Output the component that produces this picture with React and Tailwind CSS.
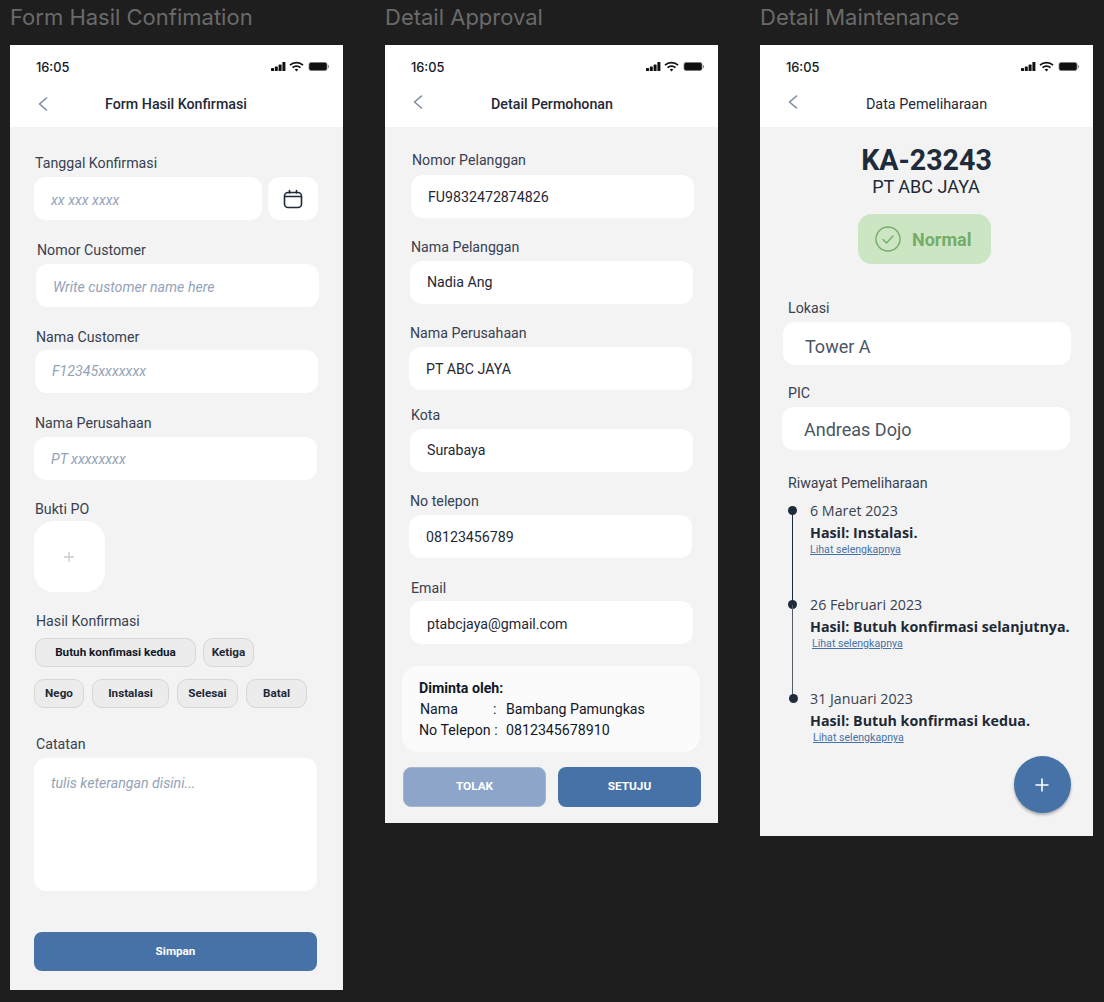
const SANS = "font-['Roboto',sans-serif]";

function StatusBar() {
  return (
    <div className="flex items-center justify-between h-[44px] pt-[1px]">
      <span className="font-['Inter',sans-serif] text-[12.8px] font-medium text-[#111827] ml-[26px]">16:05</span>
      <svg width="60" height="12" viewBox="0 0 60 12" className="mr-[14px] mt-[-2px]">
        <rect x="2" y="7" width="3" height="3" rx="0.6" fill="#111" />
        <rect x="5.8" y="5.5" width="3" height="4.5" rx="0.6" fill="#111" />
        <rect x="9.6" y="3.5" width="3" height="6.5" rx="0.6" fill="#111" />
        <rect x="13.4" y="1" width="3" height="9" rx="0.6" fill="#111" />
        <path d="M21 4.2a9.4 9.4 0 0 1 13 0" fill="none" stroke="#111" strokeWidth="1.7" />
        <path d="M23.5 6.7a5.8 5.8 0 0 1 8 0" fill="none" stroke="#111" strokeWidth="1.7" />
        <path d="M25.7 8.6a2.6 2.6 0 0 1 3.6 0L27.5 10.6z" fill="#111" />
        <rect x="40" y="1.5" width="18" height="8" rx="2" fill="#111" stroke="#777" strokeWidth="0.8" />
        <rect x="59" y="4" width="1" height="3" rx="0.5" fill="#888" />
      </svg>
    </div>
  );
}

function Chevron({ className }) {
  return (
    <svg width="10" height="14" viewBox="0 0 10 14" fill="none" className={className}>
      <path d="M8.5 1 1.5 7l7 6" stroke="#7c8aa0" strokeWidth="1.6" strokeLinecap="round" strokeLinejoin="round" />
    </svg>
  );
}

function Header({ title, chevron, titleClass }) {
  return (
    <div className="bg-white h-[82px] shrink-0">
      <StatusBar />
      <div className="relative h-[38px] flex items-start justify-center pt-[7px]">
        <Chevron className={chevron} />
        <span className={`${SANS} leading-[16px] text-[#1f2937] ${titleClass}`}>{title}</span>
      </div>
    </div>
  );
}

function Label({ children, className }) {
  return <div className={`${SANS} text-[14.2px] leading-[16px] text-[#374151] ${className}`}>{children}</div>;
}

function Input({ children, className, italic, big }) {
  return (
    <div
      className={`h-[43px] bg-white rounded-[12px] flex items-center ${SANS} ${
        italic ? "italic text-[#94a3b8] text-[14.2px]" : big ? "text-[18px] text-[#4b5563]" : "text-[14.2px] text-[#1f2937]"
      } ${className}`}
    >
      {children}
    </div>
  );
}

function Chip({ children, className }) {
  return (
    <div
      className={`h-[29px] rounded-[10px] bg-[#ececec] border border-[#d6d6d6] flex items-center justify-center ${SANS} text-[11.7px] font-bold text-[#1f2937] ${className}`}
    >
      {children}
    </div>
  );
}

function FormScreen() {
  return (
    <div className="w-[333px] h-[945px] bg-[#f3f3f3] flex flex-col">
      <Header title="Form Hasil Konfirmasi" chevron="absolute left-[28px] top-[8px]" titleClass="ml-[-1px] text-[14.25px] font-medium" />
      <Label className="mt-[28px] ml-[25px]">Tanggal Konfirmasi</Label>
      <div className="flex mt-[6px] ml-[24px] gap-[6px]">
        <Input italic className="w-[228px] pl-[17px] pt-[4px]">xx xxx xxxx</Input>
        <div className="w-[50px] h-[43px] bg-white rounded-[12px] flex items-center justify-center">
          <svg width="20" height="20" viewBox="0 0 20 20" fill="none" stroke="#1f2937" strokeWidth="1.6" strokeLinecap="round">
            <rect x="1.5" y="3.5" width="17" height="15" rx="3.5" />
            <path d="M2 7.5h16M6.5 1.5v2.5M13.5 1.5v2.5" />
          </svg>
        </div>
      </div>
      <Label className="mt-[22px] ml-[27px]">Nomor Customer</Label>
      <Input italic className="mt-[6px] ml-[26px] w-[283px] pl-[17px] pt-[4px]">Write customer name here</Input>
      <Label className="mt-[22px] ml-[26px]">Nama Customer</Label>
      <Input italic className="mt-[5px] ml-[25px] w-[283px] pl-[17px]">F12345xxxxxxx</Input>
      <Label className="mt-[22px] ml-[25px]">Nama Perusahaan</Label>
      <Input italic className="mt-[6px] ml-[24px] w-[283px] pl-[17px] pt-[2px]">PT xxxxxxxx</Input>
      <Label className="mt-[21px] ml-[25px]">Bukti PO</Label>
      <div className="mt-[4px] ml-[24px] w-[71px] h-[71px] bg-white rounded-[20px] flex items-center justify-center">
        <svg width="12" height="12" viewBox="0 0 12 12" stroke="#cfc9cc" strokeWidth="1.3" className="ml-[-2px]">
          <path d="M6 1v10M1 6h10" />
        </svg>
      </div>
      <Label className="mt-[21px] ml-[26px]">Hasil Konfirmasi</Label>
      <div className="flex mt-[9px] ml-[25px] gap-[7px]">
        <Chip className="w-[161px] text-[#111827]">Butuh konfimasi kedua</Chip>
        <Chip className="w-[51px]">Ketiga</Chip>
      </div>
      <div className="flex mt-[12px] ml-[24px] gap-[8px]">
        <Chip className="w-[50px]">Nego</Chip>
        <Chip className="w-[77px]">Instalasi</Chip>
        <Chip className="w-[61px]">Selesai</Chip>
        <Chip className="w-[61px]">Batal</Chip>
      </div>
      <Label className="mt-[28px] ml-[26px]">Catatan</Label>
      <div className={`mt-[6px] ml-[24px] w-[283px] h-[133px] bg-white rounded-[12px] pl-[17px] pt-[17px] ${SANS} italic text-[14.2px] leading-[16px] text-[#94a3b8]`}>
        tulis keterangan disini...
      </div>
      <div className={`mt-[41px] ml-[24px] w-[283px] h-[39px] bg-[#4672a8] rounded-[8px] flex items-center justify-center ${SANS} text-[11.7px] font-bold text-white`}>
        Simpan
      </div>
    </div>
  );
}

function ApprovalScreen() {
  return (
    <div className="w-[333px] h-[778px] bg-[#f3f3f3] flex flex-col">
      <Header title="Detail Permohonan" chevron="absolute left-[28px] top-[6px]" titleClass="ml-[1px] text-[14.25px] font-medium" />
      <Label className="mt-[25px] ml-[27px]">Nomor Pelanggan</Label>
      <Input className="mt-[7px] ml-[26px] w-[283px] pl-[17px] pt-[2px]">FU9832472874826</Input>
      <Label className="mt-[21px] ml-[26px]">Nama Pelanggan</Label>
      <Input className="mt-[6px] ml-[25px] w-[283px] pl-[17px]">Nadia Ang</Input>
      <Label className="mt-[21px] ml-[25px]">Nama Perusahaan</Label>
      <Input className="mt-[6px] ml-[24px] w-[283px] pl-[17px] pt-[2px]">PT ABC JAYA</Input>
      <Label className="mt-[17px] ml-[26px]">Kota</Label>
      <Input className="mt-[6px] ml-[25px] w-[283px] pl-[17px]">Surabaya</Input>
      <Label className="mt-[21px] ml-[25px]">No telepon</Label>
      <Input className="mt-[6px] ml-[24px] w-[283px] pl-[17px] pt-[2px]">08123456789</Input>
      <Label className="mt-[22px] ml-[26px]">Email</Label>
      <Input className="mt-[5px] ml-[25px] w-[283px] pl-[17px] pt-[4px]">ptabcjaya@gmail.com</Input>
      <div className={`mt-[22px] ml-[17px] w-[298px] h-[86px] bg-[#fbfbfb] rounded-[16px] pl-[17px] pt-[12px] ${SANS} text-[14.2px] leading-[21px] text-[#111827]`}>
        <div className="font-bold">Diminta oleh:</div>
        <div className="flex"><span className="w-[74px] pl-[1px]">Nama</span><span className="w-[13px]">:</span><span>Bambang Pamungkas</span></div>
        <div className="flex"><span className="w-[87px] whitespace-pre">No Telepon :</span><span>0812345678910</span></div>
      </div>
      <div className="flex mt-[15px] ml-[18px] gap-[12px]">
        <div className={`w-[143px] h-[40px] rounded-[8px] bg-[#8ca5c8] border border-[#a9b6c9] flex items-center justify-center ${SANS} text-[11.8px] font-bold text-white`}>TOLAK</div>
        <div className={`w-[143px] h-[40px] rounded-[8px] bg-[#4672a8] flex items-center justify-center ${SANS} text-[11.8px] font-bold text-white`}>SETUJU</div>
      </div>
    </div>
  );
}

function TimelineItem({ date, result, linkClass, dotClass, last, lineClass }) {
  return (
    <div className="flex h-[94px] relative">
      <div className={`w-[9px] h-[9px] rounded-full bg-[#1e2b3a] mt-[5px] shrink-0 ${dotClass}`} />
      {!last && <div className={`absolute left-[4px] top-[10px] w-[1px] h-[90px] ${lineClass}`} />}
      <div className="ml-[13px] font-['Open_Sans',sans-serif] text-[#1f2937]">
        <div className="text-[14.25px] leading-[20px] text-[#374151]">{date}</div>
        <div className="text-[14.25px] leading-[20px] font-bold mt-[2px] whitespace-nowrap">{result}</div>
        <div className={`${SANS} text-[10.6px] leading-[12px] mt-[1px] text-[#4672a8] underline ${linkClass}`}>Lihat selengkapnya</div>
      </div>
    </div>
  );
}

function MaintenanceScreen() {
  return (
    <div className="w-[333px] h-[791px] bg-[#f3f3f3] flex flex-col relative">
      <Header title="Data Pemeliharaan" chevron="absolute left-[28px] top-[6px]" titleClass="text-[14.4px] mt-[1px]" />
      <div className={`mt-[16px] text-center ${SANS} text-[28.6px] leading-[34px] font-bold text-[#1e2b3a]`}>KA-23243</div>
      <div className={`text-center mt-[-1px] pr-[1px] ${SANS} text-[18px] leading-[22px] text-[#1f2937]`}>PT ABC JAYA</div>
      <div className="mt-[16px] ml-[98px] w-[133px] h-[50px] rounded-[14px] bg-[#cce5c3] flex items-center pl-[17px] gap-[11px]">
        <svg width="26" height="26" viewBox="0 0 26 26" fill="none" stroke="#74ad68" strokeWidth="1.4" strokeLinecap="round" strokeLinejoin="round">
          <circle cx="13" cy="13" r="12" />
          <path d="m8 13.5 3.5 3.5 6.5-7" />
        </svg>
        <span className={`${SANS} text-[18px] font-bold text-[#74ad68]`}>Normal</span>
      </div>
      <Label className="mt-[36px] ml-[28px]">Lokasi</Label>
      <Input big className="mt-[6px] ml-[23px] w-[288px] pl-[22px] pt-[6px]">Tower A</Input>
      <Label className="mt-[20px] ml-[28px]">PIC</Label>
      <Input big className="mt-[6px] ml-[22px] w-[288px] pl-[22px] pt-[2px]">Andreas Dojo</Input>
      <Label className="mt-[25px] ml-[28px]">Riwayat Pemeliharaan</Label>
      <div className="mt-[10px] ml-[28px]">
        <TimelineItem date="6 Maret 2023" result="Hasil: Instalasi." lineClass="bg-[#1e2b3a]" />
        <TimelineItem date="26 Februari 2023" result="Hasil: Butuh konfirmasi selanjutnya." linkClass="ml-[2px]" lineClass="bg-[#555d66]" />
        <TimelineItem date="31 Januari 2023" result="Hasil: Butuh konfirmasi kedua." linkClass="ml-[3px]" dotClass="ml-[1px] mr-[-1px]" last />
      </div>
      <div className="absolute left-[254px] top-[711px] w-[57px] h-[57px] rounded-full bg-[#4672a8] shadow-[0_2px_3px_rgba(0,0,0,0.3)] flex items-center justify-center">
        <svg width="16" height="16" viewBox="0 0 16 16" stroke="#fff" strokeWidth="1.6" className="ml-[-1px]">
          <path d="M8 1.5v13M1.5 8h13" />
        </svg>
      </div>
    </div>
  );
}

function Column({ title, children }) {
  return (
    <div className="w-[333px] flex flex-col">
      <div className="h-[45px] font-['Inter',sans-serif] text-[22px] leading-[35px] text-[#6a6a6a] whitespace-nowrap">{title}</div>
      {children}
    </div>
  );
}

export default function App() {
  return (
    <div className="w-[1104px] h-[1002px] bg-[#1e1e1e] flex items-start gap-[42px] pl-[10px] overflow-hidden">
      <Column title="Form Hasil Confimation"><FormScreen /></Column>
      <Column title="Detail Approval"><ApprovalScreen /></Column>
      <Column title="Detail Maintenance"><MaintenanceScreen /></Column>
    </div>
  );
}
